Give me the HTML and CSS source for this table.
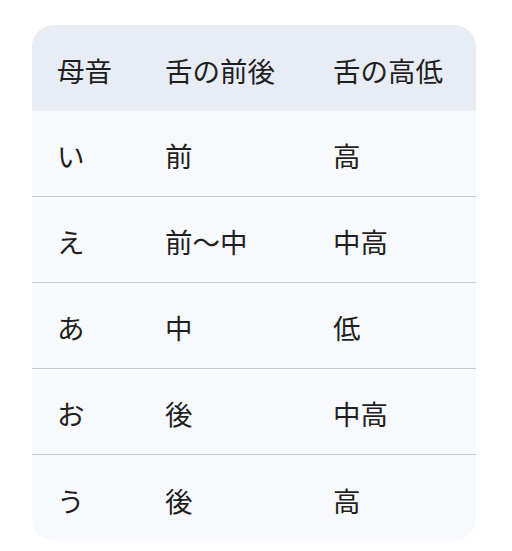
FILE: index.html
```
<!DOCTYPE html>
<html lang="ja">
<head>
<meta charset="utf-8">
<link rel="stylesheet" href="styles.css">
</head>
<body>
<div class="card">
  <div class="row head"><div>母音</div><div>舌の前後</div><div>舌の高低</div></div>
  <div class="row"><div>い</div><div>前</div><div>高</div></div>
  <div class="row"><div>え</div><div>前～中</div><div>中高</div></div>
  <div class="row"><div>あ</div><div>中</div><div>低</div></div>
  <div class="row"><div>お</div><div>後</div><div>中高</div></div>
  <div class="row last"><div>う</div><div>後</div><div>高</div></div>
</div>
</body>
</html>
```
FILE: styles.css
```
html, body { margin: 0; padding: 0; background: #ffffff; }
body { padding: 25px 36px 0 32px; font-family: "Noto Sans CJK JP", "Noto Sans", sans-serif; color: #1f1f1f; }
.card { width: 444px; border-radius: 22px; overflow: hidden; background: #f8f9fd; }
.row { display: grid; grid-template-columns: 108px 168px 1fr; height: 86px; align-items: center; font-size: 27.5px; line-height: 1.2; padding-top: 4px; border-bottom: 1px solid #c9cacf; box-sizing: border-box; }
.row > div { padding-left: 25px; }
.head { background: #e8ecf5; border-bottom: none; }
.last { border-bottom: none; }
```
